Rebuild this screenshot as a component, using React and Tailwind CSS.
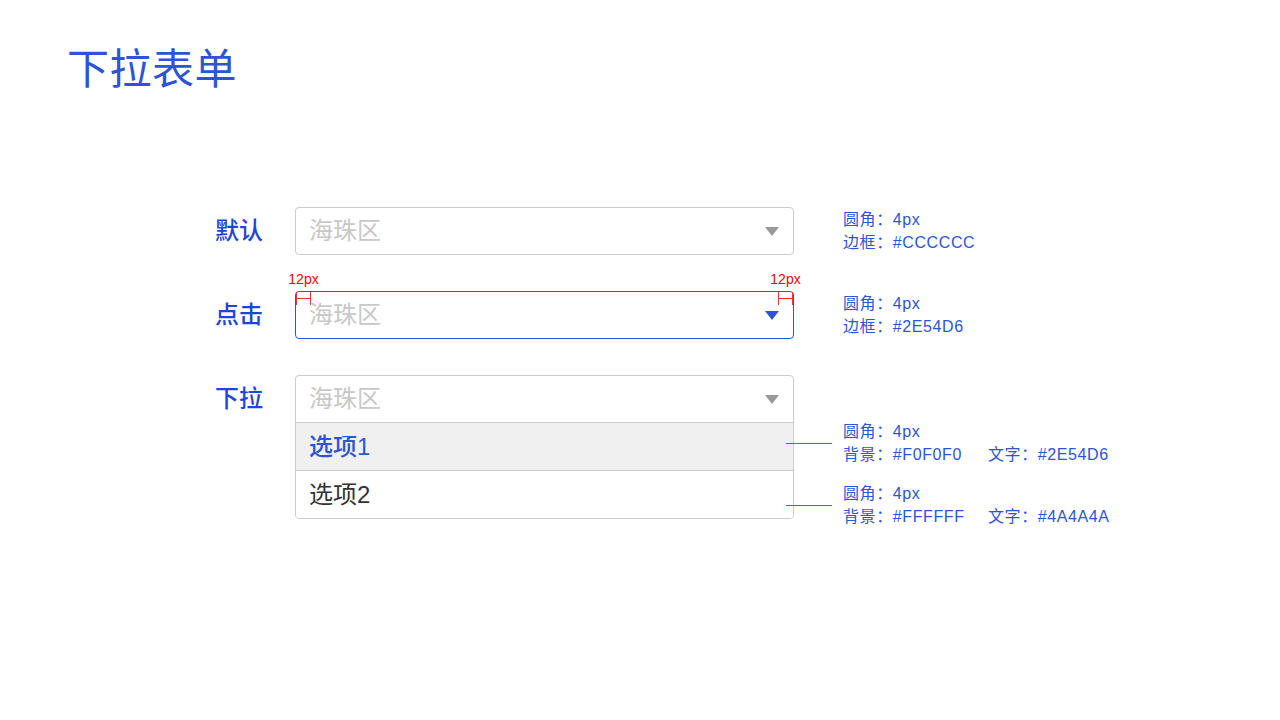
import React from 'react';

const FONT = { fontFamily: '"Liberation Sans", "Noto Sans CJK SC", sans-serif' };

function Caret({ color }) {
  return (
    <svg width="14" height="9" viewBox="0 0 14 9" className="shrink-0">
      <path d="M0 0 L14 0 L7 9 Z" fill={color} />
    </svg>
  );
}

function Note({ lines }) {
  return (
    <div className="text-[16px] leading-[23px] tracking-[0.6px] text-[#2E54D6]">
      {lines.map((l, i) =>
        Array.isArray(l) ? (
          <div key={i} className="flex whitespace-pre">
            <span className="w-[145px]">{l[0]}</span>
            <span>{l[1]}</span>
          </div>
        ) : (
          <div key={i} className="flex whitespace-pre">{l}</div>
        )
      )}
    </div>
  );
}

function Label({ children }) {
  return (
    <div className="w-[80px] shrink-0 h-[48px] flex items-center text-[24px] font-medium text-[#1F45D6] pb-[1px]">
      {children}
    </div>
  );
}

function Marker({ side }) {
  return (
    <div className={`absolute top-0 ${side === 'left' ? 'left-0' : 'right-0'} w-[15px] h-[13px]`}>
      <div className="absolute left-0 top-0 w-px h-[13px] bg-[#F0303A]" />
      <div className="absolute right-0 top-0 w-px h-[13px] bg-[#F0303A]" />
      <div className="absolute left-0 right-0 top-[6px] h-px bg-[#F0303A]" />
      <div className="absolute -top-[21px] left-1/2 -translate-x-1/2 text-[14px] leading-[16px] text-[#F00] whitespace-nowrap">
        12px
      </div>
    </div>
  );
}

export default function App() {
  return (
    <div className="w-[1280px] h-[720px] bg-white relative overflow-hidden" style={FONT}>
      <h1 className="pl-[67px] pt-[45px] text-[42px] leading-[50px] font-normal tracking-[0.5px] text-[#2E54D6]">
        下拉表单
      </h1>

      <div className="mt-[112px] pl-[215px] flex flex-col gap-[36px]">
        {/* default */}
        <div className="flex items-start">
          <Label>默认</Label>
          <div className="w-[499px] h-[48px] border border-[#CCCCCC] rounded-[4px] flex items-center justify-between pl-[13px] pr-[14px]">
            <span className="text-[24px] text-[#C8C8C8]">海珠区</span>
            <Caret color="#999999" />
          </div>
          <div className="ml-[49px] mt-[1px]">
            <Note lines={['圆角：4px', '边框：#CCCCCC']} />
          </div>
        </div>

        {/* clicked */}
        <div className="flex items-start">
          <Label>点击</Label>
          <div className="relative w-[499px] h-[48px] border border-[#2E54D6] rounded-[4px] flex items-center justify-between pl-[13px] pr-[14px]">
            <span className="text-[24px] text-[#C8C8C8]">海珠区</span>
            <Caret color="#2E54D6" />
            <Marker side="left" />
            <Marker side="right" />
          </div>
          <div className="ml-[49px] mt-[1px]">
            <Note lines={['圆角：4px', '边框：#2E54D6']} />
          </div>
        </div>

        {/* dropdown */}
        <div className="flex items-start">
          <Label>下拉</Label>
          <div className="w-[499px] border border-[#CCCCCC] rounded-[4px] overflow-hidden">
            <div className="h-[47px] flex items-center justify-between pl-[13px] pr-[14px] border-b border-[#CCCCCC]">
              <span className="text-[24px] text-[#C8C8C8]">海珠区</span>
              <Caret color="#999999" />
            </div>
            <div className="h-[48px] flex items-center pl-[13px] bg-[#F0F0F0] border-b border-[#CCCCCC]">
              <span className="text-[24px] font-medium text-[#2E54D6]">选项1</span>
            </div>
            <div className="h-[47px] flex items-center pl-[13px] bg-white">
              <span className="text-[24px] text-[#333333]">选项2</span>
            </div>
          </div>
          <div className="ml-[-8px] pt-[45px] flex flex-col gap-[16px] relative">
            <div className="flex items-center">
              <div className="w-[46px] h-px bg-[#E8323A]" />
              <div className="ml-[11px]">
                <Note lines={['圆角：4px', ['背景：#F0F0F0', '文字：#2E54D6']]} />
              </div>
            </div>
            <div className="flex items-center">
              <div className="w-[46px] h-px bg-[#E8323A]" />
              <div className="ml-[11px]">
                <Note lines={['圆角：4px', ['背景：#FFFFFF', '文字：#4A4A4A']]} />
              </div>
            </div>
          </div>
        </div>
      </div>
    </div>
  );
}
